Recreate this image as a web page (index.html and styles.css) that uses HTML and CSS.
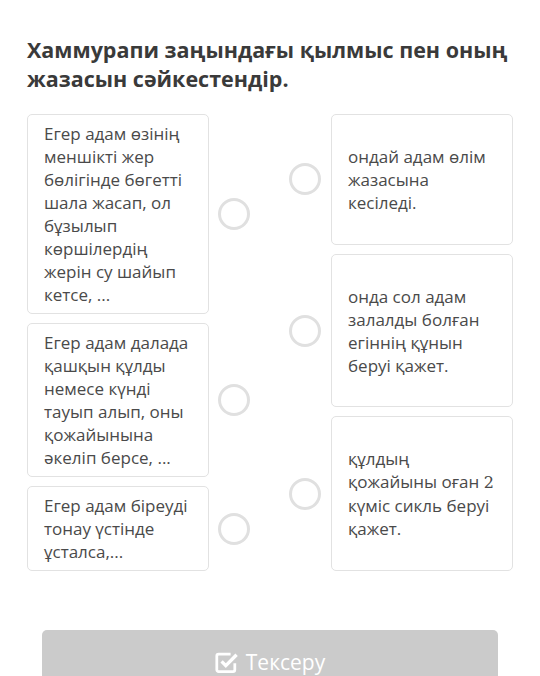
FILE: index.html
```html
<!DOCTYPE html>
<html lang="kk">

<head>
    <meta charset="UTF-8">
    <meta name="viewport" content="width=device-width, initial-scale=1.0">
    <title>Сәйкестендіру</title>
    <link rel="stylesheet" href="styles.css">
</head>

<body>
    <div class="quiz">
        <h1 class="question">Хаммурапи заңындағы қылмыс пен оның жазасын сәйкестендір.</h1>

        <div class="match">
            <div class="column left">
                <div class="item">
                    <div class="card">Егер адам өзінің меншікті жер бөлігінде бөгетті шала жасап, ол бұзылып көршілердің жерін су шайып кетсе, ...</div>
                    <span class="dot"></span>
                </div>
                <div class="item">
                    <div class="card">Егер адам далада қашқын құлды немесе күнді тауып алып, оны қожайынына әкеліп берсе, ...</div>
                    <span class="dot"></span>
                </div>
                <div class="item">
                    <div class="card">Егер адам біреуді тонау үстінде ұсталса,...</div>
                    <span class="dot"></span>
                </div>
            </div>

            <div class="column right">
                <div class="item">
                    <span class="dot"></span>
                    <div class="card"><p class="answer">ондай адам өлім жазасына кесіледі.</p></div>
                </div>
                <div class="item">
                    <span class="dot"></span>
                    <div class="card"><p class="answer">онда сол адам залалды болған егіннің құнын беруі қажет.</p></div>
                </div>
                <div class="item">
                    <span class="dot"></span>
                    <div class="card"><p class="answer">құлдың қожайыны оған <span class="num">2</span> күміс сикль беруі қажет.</p></div>
                </div>
            </div>
        </div>

        <button class="check" type="button">
            <svg class="check-icon" viewBox="0 0 20 20" width="24" height="24">
                <path d="M16.5 11v5.5a1.5 1.5 0 0 1-1.5 1.5H3A1.5 1.5 0 0 1 1.5 16.5V5A1.5 1.5 0 0 1 3 3.5h10" fill="none" stroke="#fff" stroke-width="2.3"/>
                <path d="M5.5 9.5l3.5 3.5 9-9" fill="none" stroke="#fff" stroke-width="2.8"/>
            </svg>
            Тексеру
        </button>
    </div>
</body>

</html>
```

FILE: styles.css
```css
body {
    margin: 0;
    background-color: #fff;
    font-family: "Open Sans", "Noto Sans", sans-serif;
    color: #444;
}

.quiz {
    padding: 35px 27px 0 27px;
}

.question {
    margin: 0 0 21px 0;
    font-size: 21.5px;
    line-height: 29px;
    font-weight: 700;
    color: #3a3a3a;
}

.match {
    display: flex;
    justify-content: space-between;
}

.column {
    display: flex;
    flex-direction: column;
    gap: 9px;
}

.item {
    display: flex;
    align-items: center;
    gap: 9px;
}

.right .item {
    flex: 1 1 auto;
    align-items: stretch;
    gap: 10px;
}

.right .dot {
    align-self: center;
}

.card {
    width: 148px;
    padding: 7px 16px;
    border: 1px solid #e2e2e2;
    border-radius: 5px;
    font-size: 17px;
    line-height: 23px;
    color: #4a4a4a;
}

.right .card {
    display: flex;
    align-items: center;
}

.answer {
    margin: 0;
}

.num {
    font-family: "DejaVu Serif", serif;
    font-size: 16px;
}

.dot {
    flex: none;
    width: 26px;
    height: 26px;
    border: 3px solid #e0e0e0;
    border-radius: 50%;
}

.check {
    display: flex;
    align-items: center;
    justify-content: center;
    gap: 7px;
    width: 456px;
    height: 64px;
    margin: 59px 0 0 15px;
    border: none;
    border-radius: 5px;
    background-color: #cbcbcb;
    color: #fff;
    font-family: "Open Sans", "Noto Sans", sans-serif;
    font-size: 21px;
}

.check-icon {
    flex: none;
}
```
